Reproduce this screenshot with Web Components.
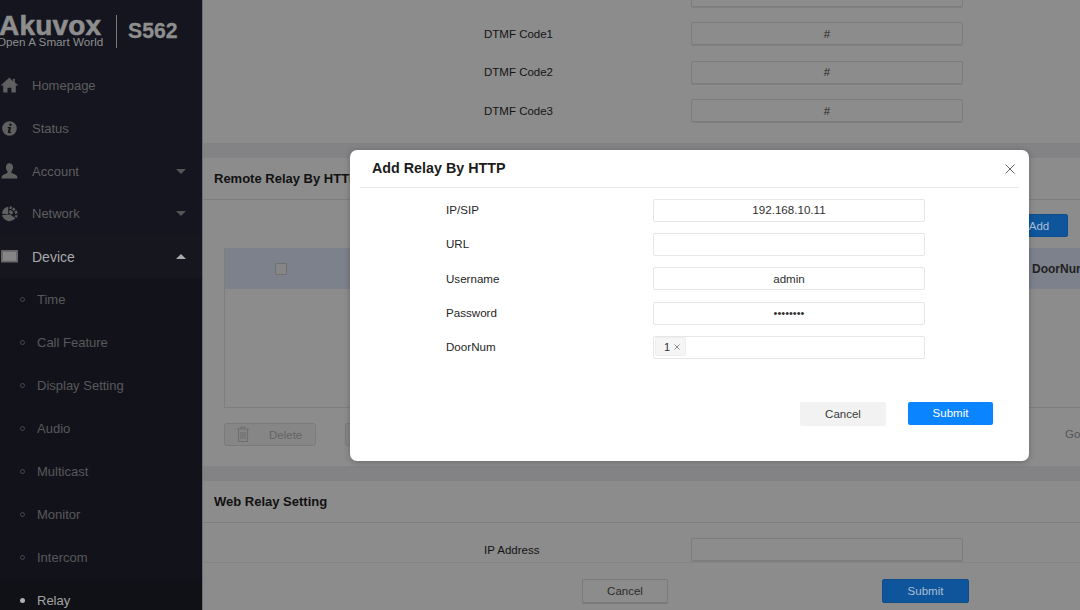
<!DOCTYPE html>
<html><head><meta charset="utf-8">
<style>
html,body{margin:0;padding:0;width:1080px;height:610px;overflow:hidden;background:#8c8c8c;font-family:"Liberation Sans",Arial,sans-serif}
</style></head>
<body>
<x-app></x-app>
<script>
const ICONS={
home:'<path d="M9.5 1 1 8.6l.9 1 1.3-1.1V16h4.3v-4.8h3.9V16h4.4V8.5l1.3 1.1.9-1-3.2-2.9V2.2h-2v2.7z"/>',
info:'<path fill-rule="evenodd" d="M9.5 1.7a7.3 7.3 0 1 0 0 14.6 7.3 7.3 0 0 0 0-14.6zM10.4 4a1.2 1.2 0 1 1 0 2.4 1.2 1.2 0 0 1 0-2.4zM7.8 7.6h3.3l-1 5h1v1H7.7l1-5h-1z"/>',
user:'<path d="M9.5.8c-2.3 0-3.6 1.7-3.6 4 0 1.7.7 3.2 1.6 4.1v1.6c-1.9.9-5.6 1.6-5.9 4.2v1.3h15.800v-1.300c-.3-2.600-4-3.300-5.900-4.200V8.900c.9-.9 1.600-2.400 1.600-4.100 0-2.300-1.300-4-3.600-4z"/>',
net:'<path d="M8.300 2.300A7.500 7.500 0 0 0 2 9.200l6.200.5.100-.1zM9.800 1.700l-.5 2.600 2.100.5.800-2.400a7 7 0 0 0-2.400-.7zM13.400 3l-1.400 2.200 1.800 1.300 1.800-1.800A7 7 0 0 0 13.400 3zM9.500 5.400 9 8.200l2.300 1.900 2-1.700-1.200-2.200zM16.500 5.700l-2.200 1.500.9 2.200 2.500-.6a7.300 7.300 0 0 0-1.200-3.100zM2.100 10.500a7.500 7.500 0 0 0 13.300 3.200L10.300 10z"/><path d="M15.400 10.700l2.400.1a7 7 0 0 1-1.100 2.500l-2.300-1.400z"/>',
dev:'<rect x="1" y="2.500" width="17" height="12.500" rx=".5" fill="#66666a"/><rect x="2.800" y="4.300" width="13.400" height="9" fill="#868686"/>'
};
function def(name,html){
  customElements.define(name,class extends HTMLElement{
    constructor(){super();this.attachShadow({mode:'open'}).innerHTML=typeof html==='function'?html(this):html;}
  });
}
const attr=(e,n,d='')=>e.getAttribute(n)??d;

def('x-logo',`<style>
:host{display:flex;align-items:flex-start;height:64px;color:#8e8e8e;overflow:hidden}
.w{margin-left:-1px;width:117px;flex:none;white-space:nowrap}
.a{font:bold 28px/22px "Liberation Sans",sans-serif;margin-top:15px;letter-spacing:.2px;-webkit-text-stroke:.6px #8e8e8e}
.o{font:11.700px/12px "Liberation Sans",sans-serif;margin-left:-2px;margin-top:-1px}
.d{width:1px;height:33px;background:#77777a;margin-top:15px;flex:none}
.s{font:bold 21.200px/26px "Liberation Sans",sans-serif;margin:18px 0 0 11px;-webkit-text-stroke:.3px #8e8e8e}
</style><div class="w"><div class="a">Akuvox</div><div class="o">Open A Smart World</div></div><div class="d"></div><div class="s">S562</div>`);

def('x-nav',e=>{
  const ic=attr(e,'icon'),on=e.hasAttribute('on'),car=attr(e,'caret');
  const col=on?'#a9a9a9':'#5e5e5f';
  return `<style>
:host{display:flex;align-items:center;height:${attr(e,'h','43')}px;background:${on?'#15161e':'transparent'};color:${col};font-size:${on?14:13}px}
svg.i{width:19px;height:19px;flex:none;fill:#5f5f60}
span{margin-left:13px;flex:1}
svg.c{width:10px;height:5px;margin-right:16px;fill:${on?'#a9a9a9':'#545455'}}
</style><svg class="i" viewBox="0 0 19 18">${ICONS[ic]}</svg><span><slot></slot></span>${car?`<svg class="c" viewBox="0 0 10 5"><path d="${car==='up'?'M5 0l5 5H0z':'M0 0h10L5 5z'}"/></svg>`:''}`;
});

def('x-sub',e=>{
  const on=e.hasAttribute('on');
  return `<style>
:host{display:flex;align-items:center;height:43px;background:${on?'#101117':'#12131a'};color:${on?'#a4a4a4':'#58585a'};font-size:13px}
i{display:block;box-sizing:border-box;width:5px;height:5px;border-radius:50%;margin-left:20px;margin-right:12px;${on?'background:#b0b0b0':'border:1px solid #47484c'}}
</style><i></i><slot></slot>`;
});

def('x-sidebar',`<style>
:host{display:block;flex:none;width:202px;height:610px;overflow:hidden;background:#14151e;border-right:1px solid #6e6e70;font-family:"Liberation Sans",sans-serif}
</style><slot name="logo"></slot><slot></slot>`);

def('x-card',e=>`<style>
:host{display:block;background:#8c8c8c;margin-bottom:14px}
.h{height:41px;padding-left:11px;display:flex;align-items:center;font:bold 13px "Liberation Sans",sans-serif;color:#111;border-bottom:1px solid #7e7e7e;white-space:nowrap}
</style>${e.hasAttribute('title')?`<div class="h">${attr(e,'title')}</div>`:''}<slot></slot>`);

def('x-row',e=>`<style>
:host{display:flex;align-items:center;height:38.500px;font-size:11.500px;color:#141414;font-family:"Liberation Sans",sans-serif}
.l{width:207px;margin-left:281px;flex:none}
.v{width:270px;height:21px;border:1px solid #7c7c7c;border-radius:2px;display:flex;align-items:center;justify-content:center;color:#2a2a2a;box-shadow:0 1px 0 #808080}
</style><div class="l"><slot></slot></div><div class="v">${attr(e,'value')}</div>`);

def('x-btn',e=>{
  const k=attr(e,'kind'),w=attr(e,'w','86'),h=attr(e,'h','23');
  const m={
    dimg:'background:#8c8c8c;border:1px solid #7a7a7a;color:#2b2b2b;box-shadow:0 1px 0 #7a7a7a',
    dimb:'background:#0e559b;border:1px solid #0e4d8a;color:#a9bfd6',
    gray:'background:#f2f2f2;color:#3a3a3a;padding-bottom:1px',
    blue:'background:#0a84ff;color:#fff;padding-bottom:1px'
  }[k];
  return `<style>:host{display:inline-flex;box-sizing:border-box;width:${w}px;height:${h}px;align-items:center;justify-content:center;border-radius:2px;font:11.500px "Liberation Sans",sans-serif;${m};flex:none}</style><slot></slot>`;
});

def('x-field',e=>{
  const tag=e.hasAttribute('tag'),pw=e.hasAttribute('pw');
  return `<style>
:host{display:flex;align-items:center;height:34.300px;font:11.600px "Liberation Sans",sans-serif;color:#262626}
.l{width:207px;margin-left:86px;flex:none;margin-top:-1px}
.v{box-sizing:border-box;width:272px;height:23px;padding-bottom:1px;background:#fff;border:1px solid #e6e6e6;border-radius:2px;display:flex;align-items:center;justify-content:${tag?'flex-start':'center'};color:#303030;${pw?'font-size:11px;':''}}
.t{display:flex;align-items:center;gap:4px;height:17px;margin-left:1px;padding:0 5px 0 8px;background:#f5f5f5;border:1px solid #eeeeee;border-radius:2px;font-size:11px}
.t svg{width:6px;height:6px;stroke:#8a8a8a;stroke-width:1;fill:none}
</style><div class="l"><slot></slot></div><div class="v">${tag?`<div class="t">1<svg viewBox="0 0 6 6"><path d="M.5.5l5 5M5.500.5l-5 5"/></svg></div>`:attr(e,'value')}</div>`;
});

def('x-modal',`<style>
:host{display:block;box-sizing:border-box;width:679px;height:311px;background:#fff;border-radius:7px;box-shadow:0 1px 6px rgba(0,0,0,.25);padding:0 10px;flex:none}
.h{border-bottom:1px solid #e9e9e9;display:flex;align-items:center;justify-content:space-between;padding:0 3px 2px 12px;height:35px;font:bold 14.300px "Liberation Sans",sans-serif;color:#1c1c1c}
.h svg{width:10px;height:10px;stroke:#666;stroke-width:1;fill:none;margin-top:3px;margin-right:1px}
.b{padding-top:5px}
.f{display:flex;justify-content:flex-end;gap:22px;padding:38px 26px 0 0}
</style><div class="h"><span>Add Relay By HTTP</span><svg viewBox="0 0 10 10"><path d="M.5.5l9 9M9.500.5l-9 9"/></svg></div><div class="b"><slot></slot></div><div class="f"><slot name="foot"></slot></div>`);

def('x-table',`<style>
:host{display:block;font:bold 12px "Liberation Sans",sans-serif;color:#222}
.top{display:flex;justify-content:flex-end;height:48px;padding:14px 12px 0 0;box-sizing:border-box}
.t{margin:0 0 0 21px;height:160px;border:1px solid #7e7e7e;border-right:0;box-sizing:border-box}
.th{height:41px;background:#7c818c;display:flex;align-items:center;padding-left:50px;position:relative;margin-top:-1px;overflow:hidden}
.cb{width:10px;height:10px;border:1px solid #707070;background:#868686;border-radius:1px}
.dn{position:absolute;left:807px;white-space:nowrap}
</style><div class="top"><x-btn kind="dimb" w="70" h="23" style="padding-left:12px">Add</x-btn></div><div class="t"><div class="th"><div class="cb"></div><div class="dn">DoorNum</div></div></div>`);

def('x-tools',`<style>
:host{display:flex;align-items:flex-start;height:58px;box-sizing:border-box;padding:15px 0 0 21px;font:11.500px "Liberation Sans",sans-serif;color:#5c5c5c}
.del{display:flex;align-items:center;box-sizing:border-box;width:92px;height:23px;border:1px solid #7b7b7b;background:#868686;border-radius:3px}
.del svg{width:14px;height:17px;margin-left:11px;fill:none;stroke:#6e6e6e;stroke-width:1.100}
.del span{margin-left:19px;color:#646464}
.next{box-sizing:border-box;width:20px;height:23px;border:1px solid #7b7b7b;border-right:0;margin-left:29px;background:#868686;border-radius:3px 0 0 3px}
.go{margin-left:auto;white-space:nowrap;width:15px;color:#555;line-height:23px}
</style><div class="del"><svg viewBox="0 0 14 17"><path d="M1 3h12M5 3V1.200h4V3M2.500 3v12.500h9V3M5 6v7M7 6v7M9 6v7"/></svg><span>Delete</span></div><div class="next"></div><div class="go">Go to</div>`);

def('x-main',`<style>
:host{display:block;position:relative;flex:1;height:610px;overflow:hidden;background:#838385}
.s{margin-top:-24px}
.scrim{position:absolute;inset:0;display:flex;align-items:flex-start;padding:150px 0 0 147px}
</style><div class="s"><slot></slot></div><div class="scrim"><slot name="over"></slot></div>`);

def('x-actions',`<style>
:host{display:flex;align-items:flex-start;height:48px;padding:16px 0 0 379px;gap:214px;background:#8c8c8c;border-top:1px solid #848484;box-sizing:border-box}
</style><slot></slot>`);

def('x-app',`<style>:host{display:flex;width:1080px;height:610px;overflow:hidden}</style>
<x-sidebar>
<x-logo slot="logo"></x-logo>
<x-nav icon="home">Homepage</x-nav><x-nav icon="info">Status</x-nav><x-nav icon="user" caret="down" h="42">Account</x-nav><x-nav icon="net" caret="down">Network</x-nav><x-nav icon="dev" caret="up" on>Device</x-nav>
<x-sub>Time</x-sub><x-sub>Call Feature</x-sub><x-sub>Display Setting</x-sub><x-sub>Audio</x-sub><x-sub>Multicast</x-sub><x-sub>Monitor</x-sub><x-sub>Intercom</x-sub><x-sub on>Relay</x-sub>
</x-sidebar>
<x-main>
<x-card style="margin-bottom:15px">
<x-row value=""></x-row><x-row value="#">DTMF Code1</x-row><x-row value="#">DTMF Code2</x-row><x-row value="#">DTMF Code3</x-row><div style="height:13px"></div>
</x-card>
<x-card title="Remote Relay By HTTP" style="margin-bottom:15px"><x-table></x-table><x-tools></x-tools></x-card>
<x-card title="Web Relay Setting" style="margin-bottom:0"><div style="height:14px"></div><x-row value="" style="height:25px">IP Address</x-row><x-actions><x-btn kind="dimg" w="86" h="24">Cancel</x-btn><x-btn kind="dimb" w="87" h="24">Submit</x-btn></x-actions></x-card>
<x-modal slot="over">
<x-field value="192.168.10.11">IP/SIP</x-field><x-field value="">URL</x-field><x-field value="admin">Username</x-field><x-field pw value="••••••••">Password</x-field><x-field tag>DoorNum</x-field>
<x-btn slot="foot" kind="gray" w="86" h="24">Cancel</x-btn><x-btn slot="foot" kind="blue" w="85" h="23">Submit</x-btn>
</x-modal>
</x-main>`);
</script>
</body></html>
